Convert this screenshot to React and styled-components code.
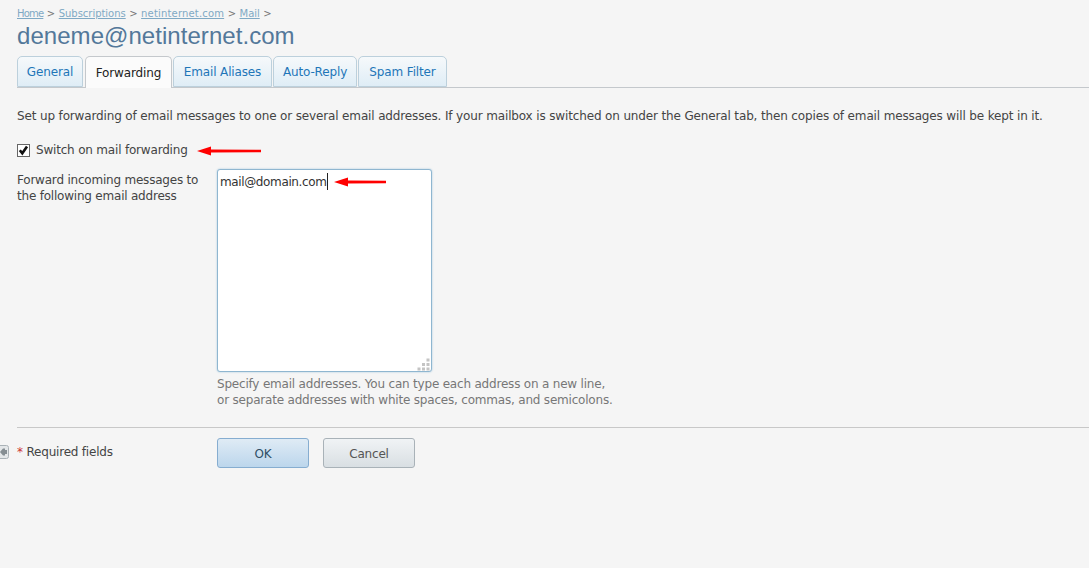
import React from "react";
import styled, { createGlobalStyle } from "styled-components";

const Global = createGlobalStyle`
  html, body { margin: 0; padding: 0; background: #f5f5f5; }
  body { font-family: "DejaVu Sans", Tahoma, sans-serif; font-size: 12px; color: #444; }
  #root { min-height: 568px; overflow: hidden; }
`;

const Page = styled.div`
  position: relative;
  width: 1089px;
  height: 568px;
  overflow: hidden;
  padding-top: 7px;
  box-sizing: border-box;
`;
const Header = styled.div`
  padding-left: 17px;
`;
const Crumbs = styled.div`
  display: flex;
  align-items: center;
  height: 13px;
  font-size: 10px;
  color: #666;
`;
const Crumb = styled.a`
  color: #7fa9c4;
  text-decoration: underline;
  letter-spacing: ${p => p.$spacing ?? -0.03}px;
`;
const Sep = styled.span`
  margin: 0 3.5px;
  color: #777;
`;
const Title = styled.h1`
  margin: 1px 0 0;
  height: 35px;
  font: 400 24px/30px "Liberation Sans", Arial, sans-serif;
  letter-spacing: 0.05px;
  color: #53789a;
`;
const TabBar = styled.div`
  display: flex;
  height: 31px;
  margin-left: 17px;
  border-bottom: 1px solid #c4c8cc;
`;
const Tab = styled.div`
  box-sizing: border-box;
  width: ${p => p.$w}px;
  margin-right: ${p => p.$mr ?? 1}px;
  height: ${p => (p.$active ? 32 : 31)}px;
  display: flex;
  align-items: center;
  justify-content: center;
  padding-top: 1px;
  font-size: 12px;
  letter-spacing: -0.14px;
  border: 1px solid #bcd0dc;
  border-bottom: ${p => (p.$active ? "none" : "1px solid #bcd0dc")};
  border-radius: 5px 5px 0 0;
  color: ${p => (p.$active ? "#222" : "#1e76b8")};
  background: ${p => (p.$active ? "#fbfbfb" : "linear-gradient(#f6f9fb, #dfedf6)")};
  ${p => p.$active && "border-color:#c4c8cc; position:relative; z-index:1;"}
`;
const Body = styled.div`
  padding: 21px 0 0 17px;
`;
const Intro = styled.p`
  margin: 0;
  height: 14px;
  line-height: 14px;
  letter-spacing: -0.144px;
  white-space: nowrap;
`;
const CheckRow = styled.label`
  display: flex;
  align-items: center;
  height: 14px;
  margin-top: 20px;
  letter-spacing: -0.19px;
`;
const CheckBox = styled.span`
  box-sizing: border-box;
  width: 13px;
  height: 13px;
  margin-right: 6px;
  border: 1px solid #666;
  background: #fff;
  display: flex;
  align-items: center;
  justify-content: center;
`;
const FormRow = styled.div`
  display: flex;
  margin-top: 12px;
`;
const FieldLabel = styled.div`
  width: 200px;
  padding-top: 3px;
  line-height: 16px;
  letter-spacing: -0.21px;
`;
const Field = styled.div`
  width: 500px;
`;
const TextBox = styled.div`
  position: relative;
  box-sizing: border-box;
  width: 215px;
  height: 203px;
  padding: 5px 2px;
  line-height: 14px;
  background: #fff;
  border: 1px solid #8fb6d0;
  border-radius: 3px;
  box-shadow: 0 0 2px #9fc4dc;
  color: #333;
  letter-spacing: -0.37px;
`;
const Caret = styled.span`
  display: inline-block;
  width: 1px;
  height: 17px;
  background: #222;
  vertical-align: -4px;
  margin-top: -2px;
`;
const Grip = styled.svg`
  position: absolute;
  right: 0;
  bottom: 0;
`;
const Hint = styled.div`
  margin-top: 4px;
  line-height: 16px;
  color: #777;
  letter-spacing: -0.2px;
  white-space: nowrap;
`;
const Rule = styled.hr`
  margin: 19px 0 0;
  border: 0;
  border-top: 1px solid #c8c8c8;
`;
const Footer = styled.div`
  position: relative;
  display: flex;
  margin-top: 10px;
`;
const Required = styled.div`
  width: 200px;
  padding-top: 7px;
  line-height: 14px;
  letter-spacing: -0.2px;
`;
const Star = styled.span`
  color: #c33;
`;
const Buttons = styled.div`
  display: flex;
  gap: 14px;
`;
const Button = styled.div`
  box-sizing: border-box;
  width: 92px;
  height: 30px;
  display: flex;
  align-items: center;
  justify-content: center;
  padding-top: 1px;
  border-radius: 3px;
  letter-spacing: -0.2px;
  border: 1px solid ${p => (p.$primary ? "#86add0" : "#a9b2b8")};
  background: ${p => (p.$primary ? "linear-gradient(#dfebf5, #bcd6ec)" : "linear-gradient(#f0f3f5, #d9dfe3)")};
  color: ${p => (p.$primary ? "#2f4f66" : "#555")};
`;
const Handle = styled.svg`
  position: absolute;
  left: -17px;
  top: 7px;
`;
const Arrow = styled.svg`
  position: absolute;
  left: ${p => p.$x}px;
  top: ${p => p.$y}px;
`;

const RedArrow = ({ x, y, w }) => (
  <Arrow $x={x} $y={y} width={w} height="12" viewBox={`0 0 ${w} 12`}>
    <path d={`M0 6 L14 1.5 L14 4.6 L${w} 4.8 L${w} 7.2 L14 7.6 L14 10.5 Z`} fill="#ff0000" />
  </Arrow>
);

const tabs = [
  ["General", 66, 2],
  ["Forwarding", 87, 1, true],
  ["Email Aliases", 99, 1],
  ["Auto-Reply", 84, 1],
  ["Spam Filter", 89, 0],
];

export default function App() {
  return (
    <Page>
      <Global />
      <Header>
        <Crumbs>
          <Crumb $spacing={-0.8}>Home</Crumb><Sep>&gt;</Sep>
          <Crumb>Subscriptions</Crumb><Sep>&gt;</Sep>
          <Crumb $spacing={0.17}>netinternet.com</Crumb><Sep>&gt;</Sep>
          <Crumb>Mail</Crumb><Sep>&gt;</Sep>
        </Crumbs>
        <Title>deneme@netinternet.com</Title>
      </Header>
      <TabBar>
        {tabs.map(([t, w, mr, a]) => (
          <Tab key={t} $w={w} $mr={mr} $active={a}>{t}</Tab>
        ))}
      </TabBar>
      <Body>
        <Intro>Set up forwarding of email messages to one or several email addresses. If your mailbox is switched on under the General tab, then copies of email messages will be kept in it.</Intro>
        <CheckRow>
          <CheckBox>
            <svg width="11" height="11" viewBox="0 0 11 11">
              <path d="M1.8 5.2 L4.3 8.3 L9 1.4" fill="none" stroke="#111" strokeWidth="2.6" />
            </svg>
          </CheckBox>
          Switch on mail forwarding
        </CheckRow>
        <FormRow>
          <FieldLabel>Forward incoming messages to<br />the following email address</FieldLabel>
          <Field>
            <TextBox>
              mail@domain.com<Caret />
              <Grip width="14" height="14" viewBox="0 0 14 14">
                <path d="M9.5 1.5h3v3h-3zM5 6h3v3H5zM9.5 6h3v3h-3zM.5 10.5h3v3h-3zM5 10.5h3v3H5zM9.5 10.5h3v3h-3z" fill="#c4c4c4" />
              </Grip>
            </TextBox>
            <Hint>
              Specify email addresses. You can type each address on a new line,<br />
              or separate addresses with white spaces, commas, and semicolons.
            </Hint>
          </Field>
        </FormRow>
        <Rule />
        <Footer>
          <Handle width="9" height="14" viewBox="0 0 9 14">
            <rect x="-3" y="0.5" width="11.5" height="13" rx="2" fill="#e4e7e9" stroke="#aab2b7" />
            <path d="M0 7 L3 3.5 H5 V5 H7 V9 H5 V10.5 H3 Z" fill="#868e93" />
          </Handle>
          <Required><Star>*</Star> Required fields</Required>
          <Buttons>
            <Button $primary>OK</Button>
            <Button>Cancel</Button>
          </Buttons>
        </Footer>
      </Body>
      <RedArrow x={197} y={145} w={64} />
      <RedArrow x={334} y={176} w={52} />
    </Page>
  );
}
